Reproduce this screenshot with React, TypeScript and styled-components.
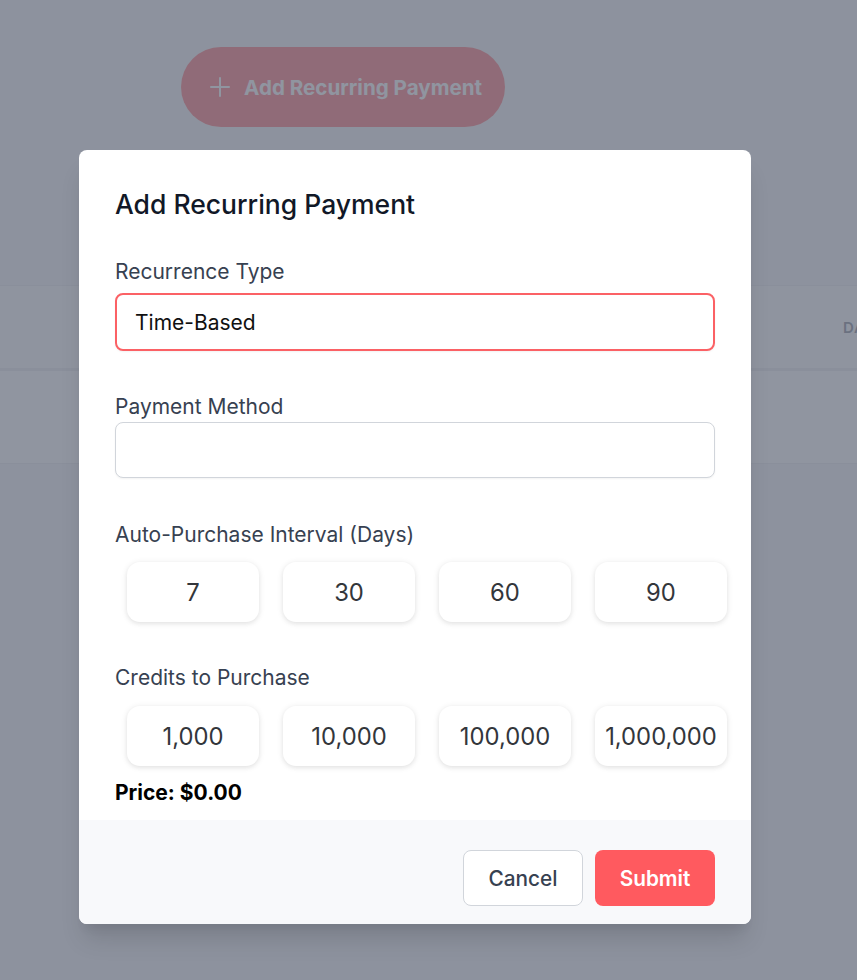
import React from 'react';
import styled, { createGlobalStyle } from 'styled-components';

const GlobalStyle = createGlobalStyle`
  html, body {
    margin: 0;
    padding: 0;
    background: #f3f4f6;
    font-family: Inter, "Noto Sans", sans-serif;
  }
  * {
    box-sizing: border-box;
  }
`;

const Page = styled.div`
  position: relative;
  height: 980px;
  overflow: hidden;
  padding-top: 47px;
`;

const Toolbar = styled.div`
  display: flex;
  padding-left: 181px;
`;

const AddButton = styled.button`
  display: flex;
  align-items: center;
  gap: 12px;
  width: 324px;
  height: 80px;
  padding: 0 0 0 27px;
  border: none;
  border-radius: 40px;
  background: #ff5a5f;
  color: #ffffff;
  font-family: Inter, sans-serif;
  font-size: 20.6px;
  font-weight: 700;
  cursor: pointer;
`;

const Table = styled.div`
  margin-top: 158px;
  background: #ffffff;
  border-top: 1px solid #e5e7eb;
  border-bottom: 1px solid #e5e7eb;
`;

const HeaderRow = styled.div`
  display: grid;
  grid-template-columns: 120px 180px 180px 180px 160px 1fr;
  height: 85px;
  align-items: center;
  background: #f9fafb;
  border-bottom: 3px solid #e5e7eb;
`;

const HeaderCell = styled.div`
  padding-left: 23px;
  font-size: 15px;
  font-weight: 600;
  letter-spacing: 0.05em;
  text-transform: uppercase;
  color: #6b7280;
  white-space: nowrap;
`;

const EmptyRow = styled.div`
  height: 92px;
`;

const Overlay = styled.div`
  position: absolute;
  inset: 0;
  background: rgba(107, 114, 128, 0.75);
  padding: 150px 0 0 79px;
`;

const Modal = styled.div`
  width: 672px;
  background: #ffffff;
  border-radius: 8px;
  overflow: hidden;
  box-shadow: 0 20px 25px -5px rgba(0, 0, 0, 0.12),
    0 10px 10px -5px rgba(0, 0, 0, 0.05);
`;

const Body = styled.div`
  padding: 38px 36px 13px 36px;
`;

const Title = styled.h3`
  margin: 0 0 38px 0;
  font-size: 26.5px;
  line-height: 32px;
  font-weight: 500;
  color: #111827;
`;

const Label = styled.div<{ $top?: number; $bottom: number }>`
  margin-top: ${({ $top }) => $top ?? 0}px;
  margin-bottom: ${({ $bottom }) => $bottom}px;
  font-size: 21px;
  line-height: 28px;
  font-weight: 400;
  color: #374151;
`;

const Input = styled.div<{ $focused?: boolean }>`
  display: flex;
  align-items: center;
  height: ${({ $focused }) => ($focused ? 58 : 56)}px;
  padding: 0 18px;
  border: ${({ $focused }) => ($focused ? '2px solid #fb6165' : '1px solid #d1d5db')};
  border-radius: 8px;
  background: #ffffff;
  box-shadow: 0 1px 2px rgba(0, 0, 0, 0.05);
  font-size: 21px;
  color: #111111;
`;

const Options = styled.div`
  display: flex;
  gap: 24px;
  padding-left: 12px;
  margin-right: -12px;
`;

const Option = styled.button`
  width: 132px;
  height: 60px;
  border: none;
  border-radius: 13px;
  background: #ffffff;
  box-shadow: 0 1px 6px rgba(0, 0, 0, 0.1), 0 2px 4px rgba(0, 0, 0, 0.04);
  font-family: Inter, sans-serif;
  font-size: 23.8px;
  color: #33363b;
  padding: 0;
  cursor: pointer;
`;

const Price = styled.div`
  margin-top: 13px;
  font-size: 21px;
  line-height: 28px;
  font-weight: 700;
  color: #000000;
`;

const Footer = styled.div`
  display: flex;
  justify-content: flex-end;
  gap: 12px;
  padding: 30px 36px 18px 36px;
  background: #f8f9fb;
`;

const FooterButton = styled.button<{ $primary?: boolean }>`
  width: 120px;
  height: 56px;
  border-radius: 8px;
  border: ${({ $primary }) => ($primary ? 'none' : '1px solid #d1d5db')};
  background: ${({ $primary }) => ($primary ? '#ff5a5f' : '#ffffff')};
  color: ${({ $primary }) => ($primary ? '#ffffff' : '#374151')};
  font-family: Inter, sans-serif;
  font-size: 20.8px;
  font-weight: ${({ $primary }) => ($primary ? 600 : 500)};
  padding: 0;
  cursor: pointer;
`;

const PlusIcon = () => (
  <svg width="24" height="24" viewBox="0 0 24 24" fill="none" stroke="currentColor" strokeWidth="2" strokeLinecap="round">
    <path d="M12 3v18M3 12h18" />
  </svg>
);

const intervals = ['7', '30', '60', '90'];
const credits = ['1,000', '10,000', '100,000', '1,000,000'];

export default function App() {
  return (
    <>
      <GlobalStyle />
      <Page>
        <Toolbar>
          <AddButton>
            <PlusIcon />
            Add Recurring Payment
          </AddButton>
        </Toolbar>

        <Table>
          <HeaderRow>
            <HeaderCell />
            <HeaderCell />
            <HeaderCell />
            <HeaderCell />
            <HeaderCell />
            <HeaderCell>Date Created</HeaderCell>
          </HeaderRow>
          <EmptyRow />
        </Table>

        <Overlay>
          <Modal>
            <Body>
              <Title>Add Recurring Payment</Title>

              <Label $bottom={7}>Recurrence Type</Label>
              <Input $focused>Time-Based</Input>

              <Label $top={42} $bottom={1}>Payment Method</Label>
              <Input />

              <Label $top={43} $bottom={13}>Auto-Purchase Interval (Days)</Label>
              <Options>
                {intervals.map((v) => (
                  <Option key={v}>{v}</Option>
                ))}
              </Options>

              <Label $top={42} $bottom={14}>Credits to Purchase</Label>
              <Options>
                {credits.map((v) => (
                  <Option key={v}>{v}</Option>
                ))}
              </Options>

              <Price>Price: $0.00</Price>
            </Body>
            <Footer>
              <FooterButton>Cancel</FooterButton>
              <FooterButton $primary>Submit</FooterButton>
            </Footer>
          </Modal>
        </Overlay>
      </Page>
    </>
  );
}
